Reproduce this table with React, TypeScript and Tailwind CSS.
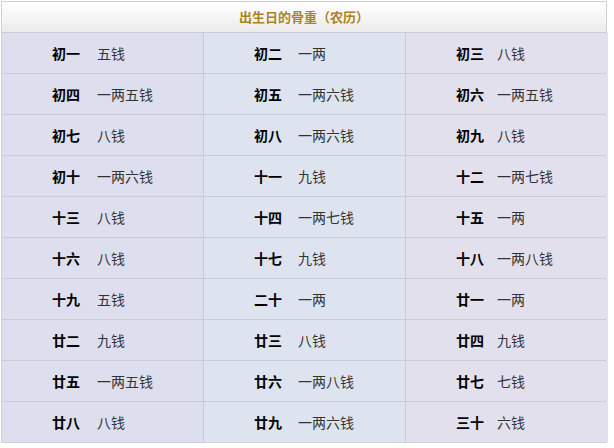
import React from "react";

const data: [string, string][] = [
  ["初一", "五钱"], ["初二", "一两"], ["初三", "八钱"],
  ["初四", "一两五钱"], ["初五", "一两六钱"], ["初六", "一两五钱"],
  ["初七", "八钱"], ["初八", "一两六钱"], ["初九", "八钱"],
  ["初十", "一两六钱"], ["十一", "九钱"], ["十二", "一两七钱"],
  ["十三", "八钱"], ["十四", "一两七钱"], ["十五", "一两"],
  ["十六", "八钱"], ["十七", "九钱"], ["十八", "一两八钱"],
  ["十九", "五钱"], ["二十", "一两"], ["廿一", "一两"],
  ["廿二", "九钱"], ["廿三", "八钱"], ["廿四", "九钱"],
  ["廿五", "一两五钱"], ["廿六", "一两八钱"], ["廿七", "七钱"],
  ["廿八", "八钱"], ["廿九", "一两六钱"], ["三十", "六钱"],
];

const bgs = ["bg-[#dddeee]", "bg-[#dee4ef]", "bg-[#e3e0ee]"];
const gaps = ["w-[45px]", "w-[44px]", "w-[41px]"];

export default function App() {
  return (
    <div
      className="w-[614px] h-[448px] bg-white pt-[1px] pl-[1px]"
      style={{ fontFamily: '"Noto Sans CJK SC", "Microsoft YaHei", sans-serif' }}
    >
      <div className="w-[606px] border border-[#cfd0d8] bg-[#c9cbd6]">
        <div className="h-[31px] flex items-center justify-center bg-gradient-to-b from-white to-[#ebebeb] border-b border-[#c9cbd6] text-[13px] font-bold text-[#ac8420]">
          出生日的骨重（农历）
        </div>
        <div className="grid grid-cols-[201px_201px_202px] gap-px">
          {data.map(([k, v], i) => (
            <div
              key={i}
              className={`${bgs[i % 3]} h-[40px] flex items-center pl-[50px] text-[14px] leading-none`}
            >
              <span className={`${gaps[i % 3]} font-bold text-black`}>{k}</span>
              <span className="text-[#333]">{v}</span>
            </div>
          ))}
        </div>
      </div>
    </div>
  );
}
